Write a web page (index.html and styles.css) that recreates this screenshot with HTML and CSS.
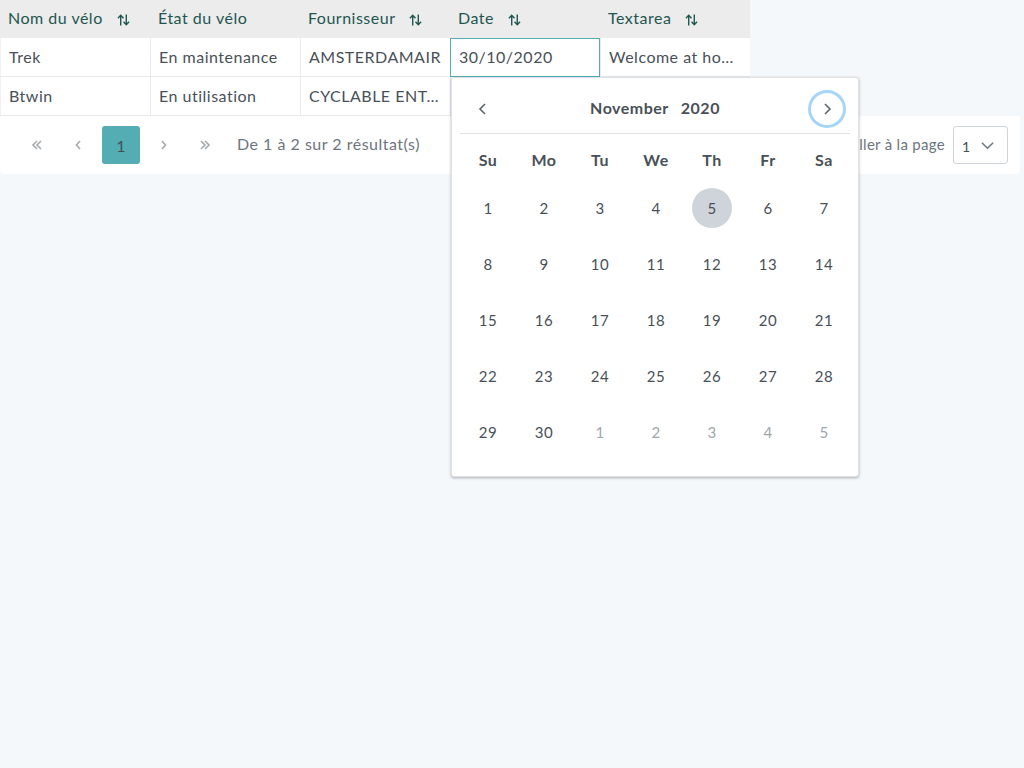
FILE: index.html
```html
<!DOCTYPE html>
<html lang="fr">
<head>
<meta charset="utf-8">
<title>Vélos</title>
<link rel="stylesheet" href="styles.css">
</head>
<body>
<div class="page">
  <div class="grid">
    <div class="row head">
      <div class="cell">Nom du vélo <svg class="sort" viewBox="0 0 14 14"><path d="M4 13V2M1 5l3-3 3 3M10 1v11M7 9l3 3 3-3"/></svg></div>
      <div class="cell">État du vélo</div>
      <div class="cell">Fournisseur <svg class="sort" viewBox="0 0 14 14"><path d="M4 13V2M1 5l3-3 3 3M10 1v11M7 9l3 3 3-3"/></svg></div>
      <div class="cell">Date <svg class="sort" viewBox="0 0 14 14"><path d="M4 13V2M1 5l3-3 3 3M10 1v11M7 9l3 3 3-3"/></svg></div>
      <div class="cell">Textarea <svg class="sort" viewBox="0 0 14 14"><path d="M4 13V2M1 5l3-3 3 3M10 1v11M7 9l3 3 3-3"/></svg></div>
    </div>
    <div class="row body">
      <div class="cell">Trek</div>
      <div class="cell">En maintenance</div>
      <div class="cell">AMSTERDAMAIR</div>
      <div class="cell editing">30/10/2020</div>
      <div class="cell">Welcome at ho…</div>
    </div>
    <div class="row body">
      <div class="cell">Btwin</div>
      <div class="cell">En utilisation</div>
      <div class="cell">CYCLABLE ENT…</div>
      <div class="cell"></div>
      <div class="cell"></div>
    </div>
  </div>

  <div class="paginator">
    <button class="pbtn" aria-label="Première page"><svg viewBox="0 0 14 14"><path d="M7 3L3 7l4 4M11 3L7 7l4 4"/></svg></button>
    <button class="pbtn" aria-label="Page précédente"><svg viewBox="0 0 14 14"><path d="M8 3L4.5 7 8 11"/></svg></button>
    <button class="pbtn active">1</button>
    <button class="pbtn" aria-label="Page suivante"><svg viewBox="0 0 14 14"><path d="M6 3l3.5 4L6 11"/></svg></button>
    <button class="pbtn" aria-label="Dernière page"><svg viewBox="0 0 14 14"><path d="M3 3l4 4-4 4M7 3l4 4-4 4"/></svg></button>
    <span class="report">De 1 à 2 sur 2 résultat(s)</span>
    <span class="spacer"></span>
    <span class="goto">Aller à la page</span>
    <div class="dropdown"><span>1</span><svg viewBox="0 0 16 16"><path d="M2 5l6 6 6-6"/></svg></div>
  </div>

  <div class="datepicker">
    <div class="dp-header">
      <button class="navbtn"><svg viewBox="0 0 16 16"><path d="M10 3L5 8l5 5"/></svg></button>
      <div class="dp-title"><span>November</span><span>2020</span></div>
      <button class="navbtn focus"><svg viewBox="0 0 16 16"><path d="M6 3l5 5-5 5"/></svg></button>
    </div>
    <div class="dp-grid">
      <div class="dn">Su</div><div class="dn">Mo</div><div class="dn">Tu</div><div class="dn">We</div><div class="dn">Th</div><div class="dn">Fr</div><div class="dn">Sa</div>
      <div class="d"><span>1</span></div><div class="d"><span>2</span></div><div class="d"><span>3</span></div><div class="d"><span>4</span></div><div class="d"><span class="sel">5</span></div><div class="d"><span>6</span></div><div class="d"><span>7</span></div>
      <div class="d"><span>8</span></div><div class="d"><span>9</span></div><div class="d"><span>10</span></div><div class="d"><span>11</span></div><div class="d"><span>12</span></div><div class="d"><span>13</span></div><div class="d"><span>14</span></div>
      <div class="d"><span>15</span></div><div class="d"><span>16</span></div><div class="d"><span>17</span></div><div class="d"><span>18</span></div><div class="d"><span>19</span></div><div class="d"><span>20</span></div><div class="d"><span>21</span></div>
      <div class="d"><span>22</span></div><div class="d"><span>23</span></div><div class="d"><span>24</span></div><div class="d"><span>25</span></div><div class="d"><span>26</span></div><div class="d"><span>27</span></div><div class="d"><span>28</span></div>
      <div class="d"><span>29</span></div><div class="d"><span>30</span></div><div class="d other"><span>1</span></div><div class="d other"><span>2</span></div><div class="d other"><span>3</span></div><div class="d other"><span>4</span></div><div class="d other"><span>5</span></div>
    </div>
  </div>
</div>
</body>
</html>
```

FILE: styles.css
```css
* { box-sizing: border-box; }
html, body { margin: 0; padding: 0; }
body {
  background: #f5f8fb;
  font-family: Lato, "Open Sans", sans-serif;
  font-size: 16px;
  letter-spacing: 0.5px;
  color: #495057;
  min-height: 768px;
}
.page {
  position: relative;
  width: 1020px;
  min-height: 768px;
}
.grid {
  width: 750px;
}
.row {
  display: flex;
}
.cell {
  width: 150px;
  flex: none;
  padding: 0 8px;
  display: flex;
  align-items: center;
  white-space: nowrap;
  overflow: hidden;
}
.head {
  height: 38px;
  background: #ececec;
  color: #1f5650;
}
.head .cell { padding-bottom: 3px; }
.sort {
  width: 13px;
  height: 16px;
  margin-left: 14px;
  margin-top: 5px;
  fill: none;
  stroke: #1f5650;
  stroke-width: 1.5;
}
.body {
  height: 39px;
  background: #fff;
  border-bottom: 1px solid #e9ecef;
}
.body .cell {
  border-left: 1px solid #e9ecef;
  padding-left: 8px;
  padding-bottom: 2px;
}
.body .cell:first-child { border-left: 1px solid #f0f2f4; }
.cell.editing {
  border: 1px solid #53adb3;
  height: 39px;
}
.paginator {
  height: 58px;
  background: #fff;
  border-radius: 0 0 4px 4px;
  display: flex;
  align-items: center;
  padding: 0 12px 0 16px;
}
.pbtn {
  width: 38px;
  height: 38px;
  margin: 0 2px;
  border: 0;
  background: transparent;
  border-radius: 3px;
  display: flex;
  align-items: center;
  justify-content: center;
  font-family: inherit;
  font-size: 16px;
  color: #495057;
  padding: 0;
}
.pbtn svg {
  width: 14px;
  height: 14px;
  fill: none;
  stroke: #a3a9ae;
  stroke-width: 1.6;
}
.pbtn.active {
  background: #53adb3;
  color: #3f5157;
}
.report {
  margin-left: 11px;
  color: #6c757d;
  padding-bottom: 3px;
}
.spacer { flex: 1; }
.goto {
  color: #6c757d;
  font-size: 15px;
  margin-right: 8px;
  letter-spacing: 0.3px;
  padding-bottom: 2px;
}
.dropdown {
  width: 55px;
  height: 38px;
  border: 1px solid #ced4da;
  border-radius: 3px;
  background: #fff;
  display: flex;
  align-items: center;
  padding: 0 0 0 8px;
  font-size: 14px;
  color: #495057;
}
.dropdown span { flex: 1; padding-top: 3px; }
.dropdown svg {
  width: 15px;
  height: 15px;
  margin-right: 12px;
  fill: none;
  stroke: #6c757d;
  stroke-width: 1.6;
}
.datepicker {
  position: absolute;
  left: 451px;
  top: 77px;
  width: 408px;
  padding: 7px 8px 8px;
  background: #fff;
  border: 1px solid #dee2e6;
  border-radius: 3px;
  box-shadow: 0 1px 3px rgba(0, 0, 0, 0.3);
}
.dp-header {
  display: flex;
  align-items: center;
  padding: 8px 7px;
  border-bottom: 1px solid #dee2e6;
}
.navbtn {
  width: 32px;
  height: 32px;
  border: 0;
  border-radius: 50%;
  background: transparent;
  padding: 0;
  display: flex;
  align-items: center;
  justify-content: center;
}
.navbtn svg {
  width: 16px;
  height: 16px;
  fill: none;
  stroke: #5d656c;
  stroke-width: 1.6;
}
.navbtn.focus {
  box-shadow: 0 0 0 3px #a6d5fa;
}
.dp-title {
  flex: 1;
  display: flex;
  justify-content: center;
  gap: 12px;
  font-weight: 700;
  color: #495057;
  padding-bottom: 3px;
}
.dp-grid {
  display: grid;
  grid-template-columns: repeat(7, 56px);
  margin: 8px 0;
}
.dn {
  height: 38px;
  display: flex;
  align-items: center;
  justify-content: center;
  font-weight: 700;
  color: #495057;
  padding-bottom: 3px;
}
.d {
  height: 56px;
  display: flex;
  align-items: center;
  justify-content: center;
  color: #495057;
  font-size: 15px;
}
.d span {
  width: 40px;
  height: 40px;
  border-radius: 50%;
  display: flex;
  align-items: center;
  justify-content: center;
}
.d span.sel { background: #ced4da; }
.d.other { color: #a0a6ac; }
```
